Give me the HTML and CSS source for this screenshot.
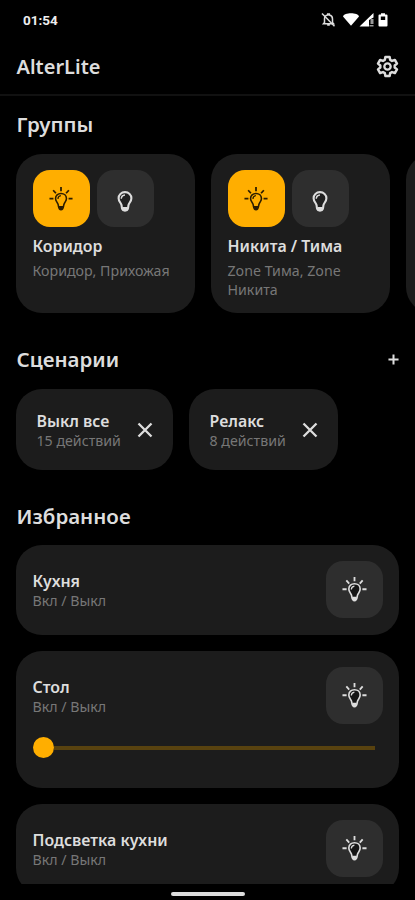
FILE: index.html
```html
<!DOCTYPE html>
<html lang="ru">
<head>
<meta charset="utf-8">
<title>AlterLite</title>
<link rel="stylesheet" href="styles.css">
</head>
<body>
<svg class="defs" aria-hidden="true">
  <symbol id="bulb" viewBox="0 0 16 22">
    <path d="M8 1.200C4.100 1.200 1.300 4 1.300 7.600c0 3 2 4.400 2.900 6.700.6 1.500.2 3 .8 4.300.5 1.300 1.500 2.100 3 2.100s2.500-.8 3-2.100c.6-1.300.2-2.800.8-4.300.9-2.300 2.900-3.700 2.900-6.700C14.700 4 11.900 1.200 8 1.200z" fill="#111" fill-opacity=".5" stroke="currentColor" stroke-width="2.200"/>
    <path d="M5.200 16.700h5.600v1.600l-1.200 2.200H6.400l-1.200-2.200z" fill="currentColor"/>
    <path d="M4.100 8.200c0-2.400 1.500-3.900 3.900-4.100" fill="none" stroke="currentColor" stroke-width="1.500"/>
  </symbol>
  <symbol id="lit" viewBox="0 0 26 26">
    <path d="M13 0v4.500M4.500 3.500l3 3.300M21.500 3.500l-3 3.300M.5 12.700h4.300M21.200 12.700h4.300" fill="none" stroke="currentColor" stroke-width="1.900"/>
    <path d="M13 7c-3.400 0-5.900 2.300-5.900 5.500 0 2.700 1.900 4 2.700 6.300.7 1.900.3 5.700 3.200 5.700s2.500-3.800 3.200-5.700c.8-2.300 2.700-3.600 2.700-6.300C18.900 9.300 16.400 7 13 7z" stroke="currentColor" stroke-width="1.700"/>
    <path d="M10.600 20.500h4.800l-.6 2.900-1 1.500h-1.600l-1-1.500z" fill="currentColor"/>
    <path d="M9.700 12.900c0-2 1.200-3.200 3.200-3.500" fill="none" stroke="currentColor" stroke-width="1.300"/>
  </symbol>
  <symbol id="cross" viewBox="0 0 16 16">
    <path d="M1.500 1.500l13 13M14.500 1.500l-13 13" fill="none" stroke="currentColor" stroke-width="2.300"/>
  </symbol>
</svg>
<div class="screen">
  <div class="status">
    <span class="clock">01:54</span>
    <svg class="status-icons" viewBox="0 0 68 16">
      <path d="M3.500 10.500V7c0-2.300 1.300-3.600 3.200-3.900V2h1.600v1.100c1.900.3 3.200 1.600 3.200 3.900v3.500l1 1.200h-10zM6.200 12.900h2.600" fill="none" stroke="#ddd" stroke-width="1.500"/>
      <path d="M1 1.500l12.500 12.700" stroke="#ddd" stroke-width="1.500"/>
      <path d="M22 4.500C23 .3 37 .3 38 4.500L30 13.700z" fill="#fff"/>
      <path d="M38.500 14.500L52.500 1v4.500L48 8v6.500z" fill="#fff"/>
      <path d="M49.500 7h3v5h-3zM48.500 13h4v1.500h-4z" fill="#999"/>
      <path d="M60 1.300h4v1.200h1.500q1 0 1 1v10q0 1-1 1h-7q-1 0-1-1v-10q0-1 1-1H60zM59.800 4.500v3.500h4.400v-3.500z" fill="#fff" fill-rule="evenodd"/>
    </svg>
  </div>
  <header class="topbar">
    <h1>AlterLite</h1>
    <svg class="gear" viewBox="0 0 24 24" fill="none" stroke="#ddd">
      <path d="M9.800 2h4.400l.6 3.100 1.900 1.100 3-1 2.200 3.800-2.400 2v2l2.400 2-2.200 3.800-3-1-1.900 1.100-.6 3.100H9.800l-.6-3.100-1.900-1.100-3 1L2.100 15l2.400-2v-2l-2.400-2 2.200-3.800 3 1 1.900-1.100z" stroke-width="2.600" stroke-linejoin="round"/>
      <circle cx="12" cy="12" r="3.300" stroke-width="2.400"/>
    </svg>
  </header>
  <main>
    <h2>Группы</h2>
    <div class="groups">
      <section class="group">
        <div class="buttons">
          <button class="tile on"><svg class="lit"><use href="#lit"/></svg></button>
          <button class="tile"><svg class="bulb"><use href="#bulb"/></svg></button>
        </div>
        <h3>Коридор</h3>
        <p>Коридор, Прихожая</p>
      </section>
      <section class="group">
        <div class="buttons">
          <button class="tile on"><svg class="lit"><use href="#lit"/></svg></button>
          <button class="tile"><svg class="bulb"><use href="#bulb"/></svg></button>
        </div>
        <h3>Никита / Тима</h3>
        <p>Zone Тима, Zone Никита</p>
      </section>
      <section class="group"></section>
    </div>
    <div class="section-head">
      <h2>Сценарии</h2>
      <svg class="plus" viewBox="0 0 12 12"><path d="M6 .5v11M.5 6h11" stroke="#ddd" stroke-width="2.200"/></svg>
    </div>
    <div class="scenes">
      <section class="scene scene-wide">
        <div><h3>Выкл все</h3><p>15 действий</p></div>
        <svg class="cross"><use href="#cross"/></svg>
      </section>
      <section class="scene">
        <div><h3>Релакс</h3><p>8 действий</p></div>
        <svg class="cross"><use href="#cross"/></svg>
      </section>
    </div>
    <h2 class="fav-title">Избранное</h2>
    <div class="favorites">
      <section class="device">
        <div class="row">
          <div><h3>Кухня</h3><p>Вкл / Выкл</p></div>
          <button class="tile"><svg class="lit"><use href="#lit"/></svg></button>
        </div>
      </section>
      <section class="device dimmer">
        <div class="row">
          <div><h3>Стол</h3><p>Вкл / Выкл</p></div>
          <button class="tile"><svg class="lit"><use href="#lit"/></svg></button>
        </div>
        <div class="slider"><span class="thumb"></span><span class="track"></span></div>
      </section>
      <section class="device">
        <div class="row">
          <div><h3>Подсветка кухни</h3><p>Вкл / Выкл</p></div>
          <button class="tile"><svg class="lit"><use href="#lit"/></svg></button>
        </div>
      </section>
    </div>
  </main>
  <footer class="navbar"><span class="handle"></span></footer>
</div>
</body>
</html>
```
FILE: styles.css
```css
* { box-sizing: border-box; }
body {
  margin: 0;
  background: #000;
  color: #ddd;
  font-family: "Noto Sans", "Open Sans", sans-serif;
}
h1, h2, h3, p { margin: 0; white-space: nowrap; }
svg { display: block; flex: none; }
.defs { width: 0; height: 0; position: absolute; }
.screen {
  width: 415px;
  height: 900px;
  overflow: hidden;
  display: flex;
  flex-direction: column;
}
.status {
  height: 40px;
  padding: 0 26px 0 23px;
  display: flex;
  align-items: center;
  justify-content: space-between;
}
.clock { font: 700 13.5px/16px Roboto, sans-serif; color: #eee; }
.status-icons { width: 68px; height: 16px; }
.topbar {
  height: 56px;
  border-bottom: 2px solid #111;
  padding: 0 16.5px 2px;
  display: flex;
  align-items: center;
  justify-content: space-between;
}
h1, h2 { font-size: 20.5px; font-weight: 600; line-height: 28px; }
h1 { font-size: 20px; padding-top: 1px; }
h2 { padding-left: .5px; }
.gear { width: 23px; height: 23px; }
main {
  height: 788px;
  overflow: hidden;
  padding: 14px 16px 0;
}
.groups { display: flex; gap: 16px; margin-top: 16px; }
.group {
  width: 179px;
  height: 159px;
  flex: none;
  border-radius: 26px;
  background: #1c1c1c;
  padding: 16px 16px 0 16.5px;
}
.buttons { display: flex; gap: 7px; }
.tile {
  width: 57px;
  height: 57px;
  flex: none;
  padding: 0;
  border: 0;
  border-radius: 17px;
  background: #2e2e2e;
  color: #ddd;
  display: flex;
  align-items: center;
  justify-content: center;
}
.tile.on { background: #ffae00; color: #2c1d00; }
.lit { width: 25px; height: 25px; fill: #151515; }
.on .lit { width: 24px; height: 24px; fill: none; }
.bulb { width: 16px; height: 21px; margin-top: 6px; }
h3 { font-size: 15.9px; font-weight: 600; line-height: 22px; }
p { font-size: 14.200px; line-height: 19px; color: #777; }
.group h3 { margin-top: 8px; }
.group p { margin-top: 4px; white-space: normal; }
.section-head {
  margin-top: 32px;
  display: flex;
  align-items: center;
  justify-content: space-between;
}
.plus { width: 11px; height: 11px; }
.scenes { display: flex; gap: 16px; margin-top: 16px; }
.scene {
  width: 149px;
  height: 81px;
  border-radius: 26px;
  background: #1c1c1c;
  padding: 0 20px 0 20.5px;
  display: flex;
  align-items: center;
  justify-content: space-between;
}
.scene h3 { padding-top: 1px; }
.scene p { margin-top: -1px; }
.scene-wide { width: 157px; }
.cross { width: 16px; height: 16px; }
.fav-title { margin-top: 32px; }
.favorites { display: flex; flex-direction: column; gap: 16px; margin-top: 15px; }
.device {
  height: 90px;
  border-radius: 26px;
  background: #1c1c1c;
  padding: 16px 16px 0 16.5px;
}
.dimmer { height: 137px; }
.row { display: flex; align-items: center; justify-content: space-between; }
.row p { margin-top: -1px; }
.slider { display: flex; align-items: center; margin-top: 13px; padding-right: 8px; }
.thumb { width: 21px; height: 21px; border-radius: 50%; background: #ffae00; }
.track { height: 4px; flex: 1; background: #58420f; }
.navbar { flex: 1; display: flex; justify-content: center; padding-top: 8px; }
.handle { width: 74px; height: 4px; border-radius: 2px; background: #ddd; }
```
